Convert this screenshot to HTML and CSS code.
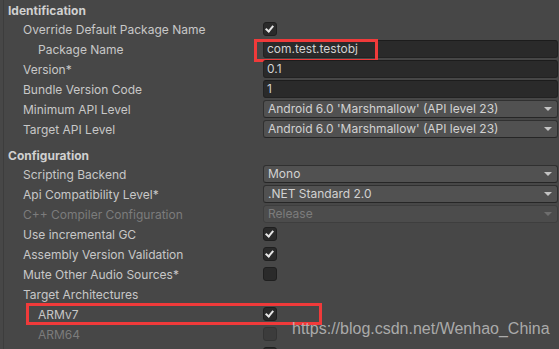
FILE: index.html
```html
<!DOCTYPE html>
<html>
<head>
    <title>Player Settings - Other Settings</title>
    <meta name="viewport" content="width=device-width, initial-scale=1.0">
    <link rel="stylesheet" href="styles.css">
</head>
<body>
    <div class="inspector">
        <div class="header">Identification</div>

        <div class="row">
            <div class="label">Override Default Package Name</div>
            <div class="control"><span class="toggle checked"></span></div>
        </div>
        <div class="row">
            <div class="label sub">Package Name</div>
            <div class="control"><div class="field">com.test.testobj</div></div>
            <div class="mark mark-package"></div>
        </div>
        <div class="row">
            <div class="label">Version*</div>
            <div class="control"><div class="field">0.1</div></div>
        </div>
        <div class="row">
            <div class="label">Bundle Version Code</div>
            <div class="control"><div class="field">1</div></div>
        </div>
        <div class="row">
            <div class="label">Minimum API Level</div>
            <div class="control"><div class="popup">Android 6.0 'Marshmallow' (API level 23)</div></div>
        </div>
        <div class="row">
            <div class="label">Target API Level</div>
            <div class="control"><div class="popup">Android 6.0 'Marshmallow' (API level 23)</div></div>
        </div>

        <div class="header spaced">Configuration</div>

        <div class="row">
            <div class="label">Scripting Backend</div>
            <div class="control"><div class="popup">Mono</div></div>
        </div>
        <div class="row">
            <div class="label">Api Compatibility Level*</div>
            <div class="control"><div class="popup">.NET Standard 2.0</div></div>
        </div>
        <div class="row disabled">
            <div class="label">C++ Compiler Configuration</div>
            <div class="control"><div class="popup">Release</div></div>
        </div>
        <div class="row">
            <div class="label">Use incremental GC</div>
            <div class="control"><span class="toggle checked"></span></div>
        </div>
        <div class="row">
            <div class="label">Assembly Version Validation</div>
            <div class="control"><span class="toggle checked"></span></div>
        </div>
        <div class="row">
            <div class="label">Mute Other Audio Sources*</div>
            <div class="control"><span class="toggle"></span></div>
        </div>
        <div class="row">
            <div class="label">Target Architectures</div>
            <div class="control"></div>
        </div>
        <div class="row">
            <div class="label sub">ARMv7</div>
            <div class="control"><span class="toggle checked"></span></div>
            <div class="mark mark-arm"></div>
        </div>
        <div class="row disabled">
            <div class="label sub">ARM64</div>
            <div class="control"><span class="toggle"></span></div>
        </div>
        <div class="row">
            <div class="label sub"></div>
            <div class="control"><span class="toggle"></span></div>
        </div>
    </div>

    <div class="watermark">https://blog.csdn.net/Wenhao_China</div>
</body>
</html>
```

FILE: styles.css
```css
html, body {
    margin: 0;
    height: 100%;
}
body {
    font-family: Inter, 'Noto Sans', sans-serif;
    font-size: 12px;
    background: #474747;
    color: #c8c8c8;
    overflow: hidden;
    position: relative;
}
.inspector {
    margin-left: 3px;
    border-left: 1px solid #3d3d3d;
    padding-right: 1px;
}
.header {
    height: 20px;
    line-height: 21px;
    padding-left: 4px;
    font-weight: 700;
    color: #d0d0d0;
}
.header.spaced {
    margin-top: 5px;
}
.row {
    position: relative;
    display: grid;
    grid-template-columns: 259px 1fr;
    height: 20px;
    align-items: center;
}
.label {
    padding-left: 19px;
    white-space: nowrap;
    line-height: 20px;
}
.label.sub {
    padding-left: 34px;
}
.control {
    display: flex;
    align-items: flex-start;
    height: 20px;
}
.field, .popup {
    box-sizing: border-box;
    width: 100%;
    height: 18px;
    line-height: 16px;
    border-radius: 3px;
    white-space: nowrap;
    overflow: hidden;
}
.field {
    background: #2a2a2a;
    border: 1px solid #222;
    border-top-color: #1c1c1c;
    padding-left: 3px;
    color: #d2d2d2;
}
.popup {
    position: relative;
    background: #515151;
    border: 1px solid #303030;
    border-bottom-color: #262626;
    padding-left: 4px;
    color: #d2d2d2;
}
.popup::after {
    content: "";
    position: absolute;
    right: 5px;
    top: 6px;
    border-left: 4px solid transparent;
    border-right: 4px solid transparent;
    border-top: 4px solid #c4c4c4;
}
.toggle {
    box-sizing: border-box;
    display: block;
    width: 14px;
    height: 14px;
    margin-top: 2px;
    border-radius: 3px;
    background: #2a2a2a;
    border: 1px solid #1f1f1f;
    position: relative;
}
.toggle.checked::after {
    content: "";
    position: absolute;
    left: 3px;
    top: 1px;
    width: 3px;
    height: 6px;
    border-right: 2px solid #e6e6e6;
    border-bottom: 2px solid #e6e6e6;
    transform: rotate(40deg);
}
.disabled {
    color: #7c7c7c;
}
.disabled .popup {
    background: #4c4c4c;
    border-color: #3e3e3e;
    color: #7c7c7c;
}
.disabled .popup::after {
    border-top-color: #6e6e6e;
}
.disabled .toggle {
    background: #3c3c3c;
    border-color: #343434;
}
.mark {
    position: absolute;
    border: 3px solid #f03a3a;
    box-sizing: border-box;
    pointer-events: none;
}
.mark-package {
    left: 250px;
    top: -1px;
    width: 124px;
    height: 23px;
}
.mark-arm {
    left: 22px;
    top: -2px;
    width: 296px;
    height: 22px;
}
.watermark {
    position: absolute;
    left: 292px;
    top: 320px;
    font-family: 'Liberation Sans', Arial, sans-serif;
    font-size: 16px;
    color: rgba(200, 200, 200, 0.78);
    white-space: nowrap;
}
```
